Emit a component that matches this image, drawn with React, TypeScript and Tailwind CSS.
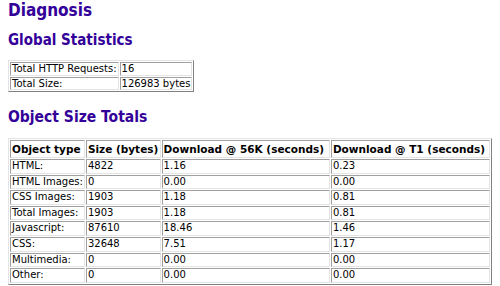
import React from 'react';

const stats: [string, string][] = [
  ['Total HTTP Requests:', '16'],
  ['Total Size:', '126983 bytes'],
];

const rows: [string, string, string, string][] = [
  ['HTML:', '4822', '1.16', '0.23'],
  ['HTML Images:', '0', '0.00', '0.00'],
  ['CSS Images:', '1903', '1.18', '0.81'],
  ['Total Images:', '1903', '1.18', '0.81'],
  ['Javascript:', '87610', '18.46', '1.46'],
  ['CSS:', '32648', '7.51', '1.17'],
  ['Multimedia:', '0', '0.00', '0.00'],
  ['Other:', '0', '0.00', '0.00'],
];

const headers: [string, string][] = [
  ['Object type', 'w-[72px]'],
  ['Size (bytes)', 'w-[75px]'],
  ['Download @ 56K (seconds)', 'w-[172px]'],
  ['Download @ T1 (seconds)', 'w-[162px]'],
];

const cell = 'border border-t-[#a0a0a0] border-l-[#a0a0a0] border-r-[#e4e4e4] border-b-[#e4e4e4] px-[1px] py-0 text-left align-top whitespace-nowrap';
const table = 'border-separate border-spacing-[1px] border border-t-[#e4e4e4] border-l-[#e4e4e4] border-r-[#808080] border-b-[#808080] text-[10px]';
const heading = "font-['DejaVu_Sans_Condensed','DejaVu_Sans',sans-serif] font-bold text-[#330099]";

export default function App() {
  return (
    <div className="bg-white text-black px-2 pt-[2px] font-['DejaVu_Sans',Verdana,sans-serif] w-[500px] h-[286px] overflow-hidden">
      <h1 className={`${heading} text-[17px] leading-[17px]`}>Diagnosis</h1>

      <h2 className={`${heading} text-[15px] leading-[15px] mt-[14px]`}>Global Statistics</h2>
      <table className={`${table} leading-[11.5px] mt-[12px]`}>
        <tbody>
          {stats.map(([k, v]) => (
            <tr key={k}>
              <td className={`${cell} w-[104px]`}>{k}</td>
              <td className={`${cell} w-[70px]`}>{v}</td>
            </tr>
          ))}
        </tbody>
      </table>

      <h2 className={`${heading} text-[15.5px] leading-[15px] mt-[18px]`}>Object Size Totals</h2>
      <table className={`${table} leading-[12.6px] mt-[13px]`}>
        <thead>
          <tr>
            {headers.map(([h, w]) => (
              <th key={h} className={`${cell} ${w} text-[10.5px] font-bold leading-[16px]`}>{h}</th>
            ))}
          </tr>
        </thead>
        <tbody>
          {rows.map((r) => (
            <tr key={r[0]}>
              {r.map((c, i) => (
                <td key={i} className={cell}>{c}</td>
              ))}
            </tr>
          ))}
        </tbody>
      </table>
    </div>
  );
}
